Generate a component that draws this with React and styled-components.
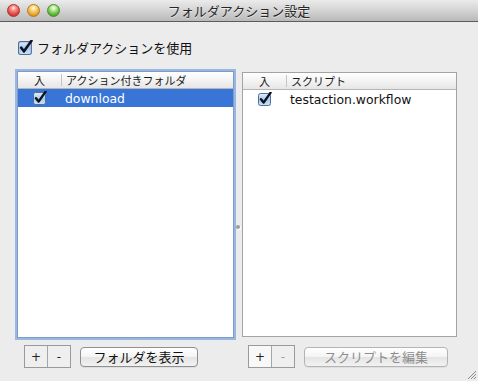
import React from 'react';
import styled, { createGlobalStyle } from 'styled-components';

const GlobalStyle = createGlobalStyle`
  html, body {
    margin: 0;
    padding: 0;
    background: #ececec;
  }
  body {
    font-family: "DejaVu Sans", "Noto Sans CJK JP", sans-serif;
    color: #111;
  }
`;

const Window = styled.div`
  width: 478px;
  height: 381px;
  display: flex;
  flex-direction: column;
  background: #ececec;
  position: relative;
  overflow: hidden;
`;

const TitleBar = styled.div`
  height: 21px;
  border-bottom: 1px solid #5c5c5c;
  background: linear-gradient(#ebebeb, #d3d3d3 50%, #b9b9b9);
  display: flex;
  align-items: center;
  position: relative;
`;

const Lights = styled.div`
  display: flex;
  gap: 7px;
  padding-left: 7px;
`;

const Light = styled.span`
  width: 13px;
  height: 13px;
  border-radius: 50%;
  box-sizing: border-box;
  border: 1px solid ${p => p.edge};
  background: radial-gradient(circle at 50% 28%, #fff 0, ${p => p.light} 22%, ${p => p.color} 65%, ${p => p.dark} 100%);
`;

const Title = styled.div`
  position: absolute;
  left: 0;
  right: 0;
  text-align: center;
  font-family: "Noto Sans CJK JP", sans-serif;
  font-size: 13px;
  color: #262626;
  text-shadow: 0 1px 0 rgba(255, 255, 255, 0.6);
  pointer-events: none;
`;

const Body = styled.div`
  flex: 1;
  display: flex;
  flex-direction: column;
  padding: 18px 21px 0 17px;
`;

const MasterCheck = styled.label`
  display: flex;
  align-items: center;
  gap: 4px;
  height: 15px;
  padding-left: 1px;
  font-family: "Noto Sans CJK JP", sans-serif;
  font-size: 13px;
  color: #111;
`;

const Panes = styled.div`
  display: flex;
  gap: 8px;
  margin-top: 16px;
  position: relative;
`;

const Column = styled.div`
  width: ${p => p.w}px;
  display: flex;
  flex-direction: column;
`;

const Table = styled.div`
  height: ${p => (p.focused ? 267 : 265)}px;
  box-sizing: border-box;
  background: #fff;
  border: 1px solid ${p => (p.focused ? '#7f9cc6' : '#a3a3a3')};
  box-shadow: ${p => (p.focused ? '0 0 0 2px rgba(125, 166, 222, 0.75)' : 'none')};
  margin: ${p => (p.focused ? 0 : '1px 0')};
  display: flex;
  flex-direction: column;
`;

const HeaderRow = styled.div`
  display: grid;
  grid-template-columns: ${p => p.first}px 1fr;
  height: 16px;
  border-bottom: 1px solid #b5b5b5;
  background: linear-gradient(#ffffff, #f3f3f3 50%, #e6e6e6);
  font-family: "Noto Sans CJK JP", sans-serif;
  font-size: 11px;
  color: #1a1a1a;
`;

const HeaderCell = styled.div`
  text-align: ${p => (p.center ? 'center' : 'left')};
  padding-left: ${p => (p.center ? 0 : 4)}px;
  border-left: ${p => (p.center ? 'none' : '1px solid #c4c4c4')};
  margin: ${p => (p.center ? 0 : '2px 0')};
  line-height: ${p => (p.center ? 16 : 12)}px;
  height: ${p => (p.center ? 16 : 12)}px;
`;

const Row = styled.div`
  display: grid;
  grid-template-columns: ${p => p.first}px 1fr;
  height: 18px;
  align-items: center;
  background: ${p => (p.selected ? '#3875d7' : 'transparent')};
  color: ${p => (p.selected ? '#fff' : '#111')};
`;

const CheckCell = styled.div`
  display: flex;
  justify-content: center;
`;

const NameCell = styled.div`
  padding-left: 4px;
  font-family: "DejaVu Sans", sans-serif;
  font-size: 12.4px;
`;

const Toolbar = styled.div`
  display: flex;
  align-items: center;
  gap: 9px;
  margin-top: 7px;
  padding-left: ${p => p.inset}px;
`;

const Segmented = styled.div`
  display: flex;
  height: 23px;
  box-sizing: border-box;
  border: 1px solid #9a9a9a;
  background: #efefef;
`;

const SegButton = styled.div`
  width: 22px;
  display: flex;
  align-items: center;
  justify-content: center;
  font-family: "DejaVu Sans", sans-serif;
  font-size: 12px;
  color: ${p => (p.disabled ? '#a0a0a0' : '#222')};
  border-left: ${p => (p.divider ? '1px solid #a6a6a6' : 'none')};
  background: ${p => (p.pressed ? '#f8f8f8' : 'transparent')};
`;

const PushButton = styled.div`
  width: ${p => p.w}px;
  height: 20px;
  box-sizing: border-box;
  border: 1px solid ${p => (p.disabled ? '#b4b4b4' : '#8f8f8f')};
  border-radius: 4px;
  background: linear-gradient(#ffffff, #f4f4f4 50%, #e4e4e4 51%, #f2f2f2);
  display: flex;
  align-items: center;
  justify-content: center;
  font-family: "Noto Sans CJK JP", sans-serif;
  font-size: 13px;
  color: ${p => (p.disabled ? '#8d8d8d' : '#111')};
  box-shadow: 0 1px 0 rgba(0, 0, 0, 0.06);
`;

const SplitDimple = styled.div`
  position: absolute;
  left: 219px;
  top: 154px;
  width: 4px;
  height: 4px;
  border-radius: 50%;
  background: #9c9c9c;
  box-shadow: 1px 1px 0 #fff;
`;

const Grip = styled.svg`
  position: absolute;
  right: 1px;
  bottom: 1px;
`;

function Check({ size = 14 }) {
  return (
    <svg width={size} height={size} viewBox="0 0 14 14">
      <defs>
        <linearGradient id="cbg" x1="0" y1="0" x2="0" y2="1">
          <stop offset="0" stopColor="#e4effb" />
          <stop offset="0.5" stopColor="#a9c9ee" />
          <stop offset="1" stopColor="#cfe2f7" />
        </linearGradient>
      </defs>
      <rect x="0.5" y="1.5" width="12" height="12" rx="2" fill="url(#cbg)" stroke="#4f6f9c" />
      <path d="M3 7.2 L5.6 10.6 L12.6 0.6" fill="none" stroke="#0d1420" strokeWidth="2.4" strokeLinecap="round" strokeLinejoin="round" />
    </svg>
  );
}

function ListPane({ focused, width, first, column, rows, inset, button, buttonWidth, disabled }) {
  return (
    <Column w={width}>
      <Table focused={focused}>
        <HeaderRow first={first}>
          <HeaderCell center>入</HeaderCell>
          <HeaderCell>{column}</HeaderCell>
        </HeaderRow>
        {rows.map(r => (
          <Row key={r.name} first={first} selected={r.selected}>
            <CheckCell><Check /></CheckCell>
            <NameCell>{r.name}</NameCell>
          </Row>
        ))}
      </Table>
      <Toolbar inset={inset}>
        <Segmented>
          <SegButton pressed={disabled}>+</SegButton>
          <SegButton divider disabled={disabled}>-</SegButton>
        </Segmented>
        <PushButton w={buttonWidth} disabled={disabled}>{button}</PushButton>
      </Toolbar>
    </Column>
  );
}

function App() {
  return (
    <Window>
      <GlobalStyle />
      <TitleBar>
        <Lights>
          <Light color="#e0443e" light="#ff9a90" dark="#b52a24" edge="#a7322c" />
          <Light color="#e9a630" light="#ffe08a" dark="#c07a12" edge="#b07a25" />
          <Light color="#5cb83a" light="#c4f0a0" dark="#3a8a20" edge="#4b8a30" />
        </Lights>
        <Title>フォルダアクション設定</Title>
      </TitleBar>
      <Body>
        <MasterCheck>
          <Check size={15} />
          フォルダアクションを使用
        </MasterCheck>
        <Panes>
          <ListPane
            focused
            width={217}
            first={43}
            column="アクション付きフォルダ"
            rows={[{ name: 'download', selected: true }]}
            inset={7}
            button="フォルダを表示"
            buttonWidth={118}
          />
          <ListPane
            width={215}
            first={43}
            column="スクリプト"
            rows={[{ name: 'testaction.workflow' }]}
            inset={6}
            button="スクリプトを編集"
            buttonWidth={144}
            disabled
          />
          <SplitDimple />
        </Panes>
      </Body>
      <Grip width="12" height="12" viewBox="0 0 12 12">
        <path d="M11 3 L3 11 M11 6 L6 11 M11 9 L9 11" stroke="#8a8a8a" strokeWidth="1" />
      </Grip>
    </Window>
  );
}

export default App;
